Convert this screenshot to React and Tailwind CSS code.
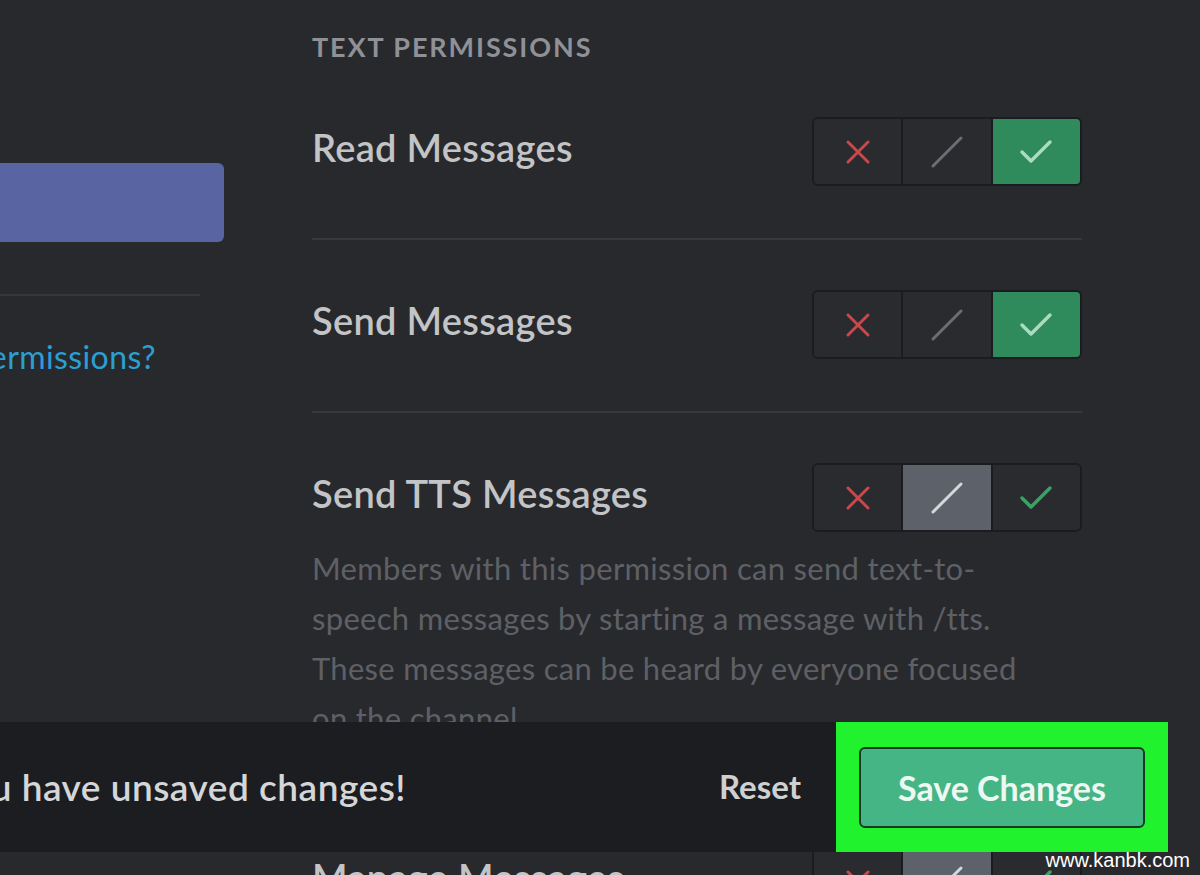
import React from "react";

const rows = [
  { label: "Read Messages", state: "allow" },
  { label: "Send Messages", state: "allow" },
  {
    label: "Send TTS Messages",
    state: "neutral",
    note: "Members with this permission can send text-to-speech messages by starting a message with /tts. These messages can be heard by everyone focused on the channel.",
  },
  { label: "Manage Messages", state: "neutral" },
];

const XIcon = () => (
  <svg width="28" height="28" viewBox="0 0 28 28">
    <path d="M4 4 L24 24 M24 4 L4 24" stroke="#c8484b" strokeWidth="3" strokeLinecap="round" />
  </svg>
);

const SlashIcon = ({ active }) => (
  <svg width="34" height="34" viewBox="0 0 34 34">
    <path d="M3 31 L31 3" stroke={active ? "#d4d7db" : "#6b6e73"} strokeWidth="3" strokeLinecap="round" />
  </svg>
);

const CheckIcon = ({ active }) => (
  <svg width="34" height="26" viewBox="0 0 34 26">
    <path
      d="M3 13 L12 22 L31 3"
      fill="none"
      stroke={active ? "#a9dcc0" : "#3aa364"}
      strokeWidth="3.5"
      strokeLinecap="round"
      strokeLinejoin="round"
    />
  </svg>
);

const Toggle = ({ state }) => (
  <div className="flex h-[69px] w-[270px] shrink-0 overflow-hidden rounded-md border-2 border-[#1b1c1f]">
    <div className="flex flex-1 items-center justify-center border-r-2 border-[#1b1c1f] bg-[#2a2b2f]">
      <XIcon />
    </div>
    <div
      className={`flex flex-1 items-center justify-center border-r-2 border-[#1b1c1f] ${
        state === "neutral" ? "bg-[#5c616a]" : "bg-[#2a2b2f]"
      }`}
    >
      <SlashIcon active={state === "neutral"} />
    </div>
    <div
      className={`flex flex-1 items-center justify-center ${
        state === "allow" ? "bg-[#2f8a5c]" : "bg-[#2a2b2f]"
      }`}
    >
      <CheckIcon active={state === "allow"} />
    </div>
  </div>
);

export default function App() {
  return (
    <div
      className="relative h-[875px] w-[1200px] overflow-hidden bg-[#28292d]"
      style={{ fontFamily: "Lato, 'Open Sans', sans-serif" }}
    >
      <div className="flex">
        {/* left column, cut off by the crop */}
        <div className="w-[224px] shrink-0 pt-[163px]">
          <div className="h-[79px] rounded-r-md bg-[#5865a2]" />
          <div className="mt-[52px] h-[2px] w-[200px] bg-[#36373b]" />
          <div className="mt-[41px] flex w-[156px] justify-end overflow-hidden">
            <span className="whitespace-nowrap text-[32px] leading-[40px] tracking-[0.4px] text-[#2a9fd4]">
              Help with Permissions?
            </span>
          </div>
        </div>

        {/* main column */}
        <div className="ml-[88px] w-[770px]">
          <h2 className="pt-[31px] text-[27px] font-bold leading-[32px] tracking-[1.9px] text-[#8f9196]">
            TEXT PERMISSIONS
          </h2>

          {rows.map((row, i) => (
            <div key={row.label}>
              {i > 0 && <div className="h-[2px] bg-[#37383c]" />}
              <div className={i === 0 ? "pt-[54px]" : "pt-[50px]"}>
                <div className="flex items-center justify-between">
                  <span className="-mt-2 text-[38px] font-semibold tracking-[0.3px] text-[#c3c4c6]">
                    {row.label}
                  </span>
                  <Toggle state={row.state} />
                </div>
                {row.note && (
                  <p className="mt-[11px] w-[740px] text-[31px] leading-[50px] tracking-[0.3px] text-[#5e6065]">
                    {row.note}
                  </p>
                )}
              </div>
              <div className="h-[52px]" />
            </div>
          ))}
        </div>
      </div>

      {/* unsaved changes notice */}
      <div className="absolute left-0 top-[722px] flex h-[130px] w-[1168px] items-center bg-[#1c1d21]">
        <div className="flex w-[406px] justify-end overflow-hidden">
          <span className="whitespace-nowrap text-[37px] font-semibold tracking-[0.5px] text-[#d5d6d8]">
            Careful — you have unsaved changes!
          </span>
        </div>
        <span className="ml-[313px] text-[33px] font-bold text-[#cfd0d2]">Reset</span>
        <div className="ml-[35px] flex h-[130px] w-[332px] items-center justify-center bg-[#20f22e]">
          <div className="flex h-[81px] w-[286px] items-center justify-center rounded-md border-2 border-[#173a22] bg-[#45b585]">
            <span className="text-[34px] font-bold text-[#eef8f2]">Save Changes</span>
          </div>
        </div>
      </div>

      {/* watermark */}
      <span
        className="absolute right-[10px] top-[845px] text-[20px] text-white"
        style={{ fontFamily: "'Liberation Sans', Arial, sans-serif" }}
      >
        www.kanbk.com
      </span>
    </div>
  );
}
